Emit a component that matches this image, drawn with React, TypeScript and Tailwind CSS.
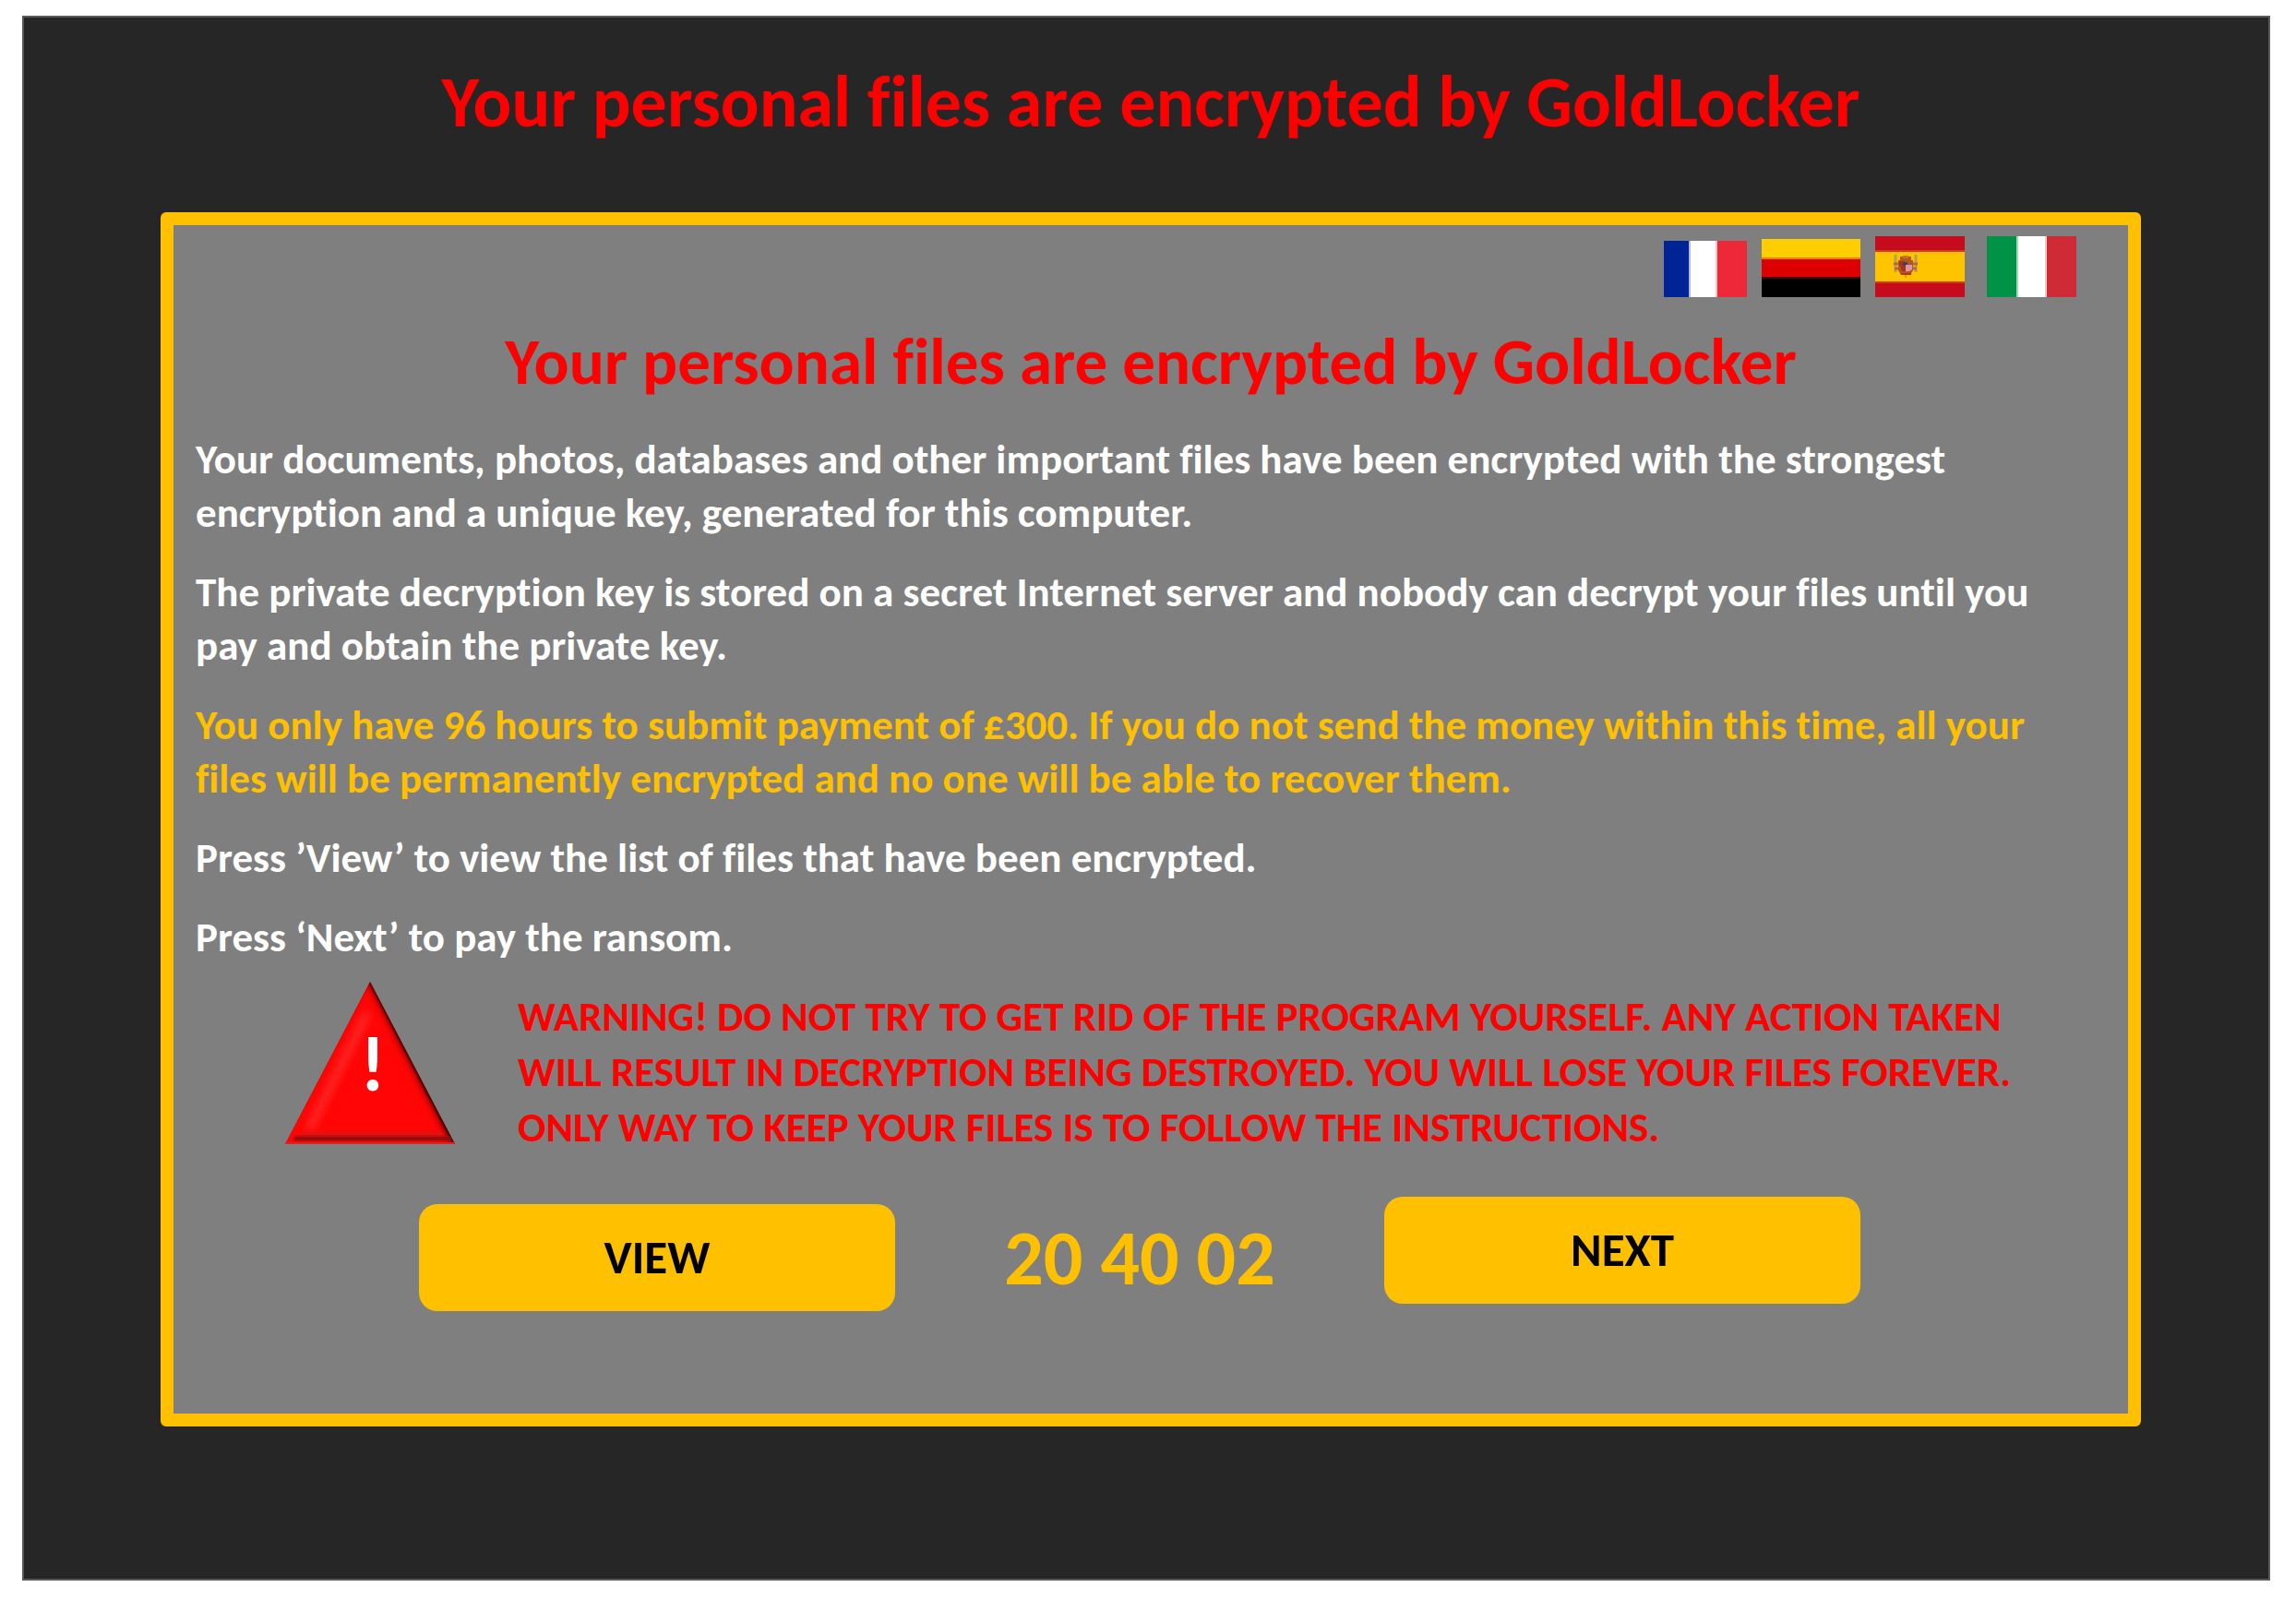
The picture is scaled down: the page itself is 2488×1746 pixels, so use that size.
import React from 'react';

function FrenchFlag() {
  return (
    <svg viewBox="0 0 90 61" className="block w-[90px] h-[61px]" aria-hidden="true">
      <rect width="90" height="61" fill="#ffffff" />
      <rect width="27" height="61" fill="#002395" />
      <rect x="27" width="2" height="61" fill="#b2bddf" />
      <rect x="56" width="2" height="61" fill="#f9bfc4" />
      <rect x="58" width="32" height="61" fill="#ed2939" />
    </svg>
  );
}

function GermanFlag() {
  return (
    <svg viewBox="0 0 107 63" className="block w-[107px] h-[63px]" aria-hidden="true">
      <rect width="107" height="21" fill="#ffce00" />
      <rect y="21" width="107" height="21" fill="#dd0000" />
      <rect y="41" width="107" height="22" fill="#000000" />
      <rect y="20" width="107" height="2" fill="#f08000" />
      <rect y="41" width="107" height="2" fill="#500000" />
    </svg>
  );
}

function SpanishFlag() {
  return (
    <svg viewBox="0 0 97 66" className="block w-[97px] h-[66px]" aria-hidden="true">
      <rect width="97" height="66" fill="#c60b1e" />
      <rect y="15" width="97" height="36" fill="#d63a18" />
      <rect y="17" width="97" height="32" fill="#ffc400" />
      {/* Coat of arms */}
      <path d="M22 20v19M44 20v19" stroke="#b9a04a" strokeWidth="3" />
      <path d="M20 30h5M41 30h5M21 35h4M41 35h4" stroke="#b8684a" strokeWidth="3" />
      <path d="M27 22h12v4h2v11l-3 5H28l-3-5V26h2z" fill="#b5561c" />
      <path d="M30 21h6v3h-6z" fill="#c8781c" />
      <path d="M26 27h6v5h-6z" fill="#a03a14" />
      <path d="M30 28h5v4h-5z" fill="#4a3c60" />
      <path d="M33 31h7v5l-3 2h-4z" fill="#d59aa8" />
      <path d="M27 32h6v6h-4z" fill="#a8321a" />
      <path d="M28 40h11v2H28z" fill="#b03a14" />
      <path d="M32 42h2v3h-2z" fill="#d9a010" />
    </svg>
  );
}

function ItalianFlag() {
  return (
    <svg viewBox="0 0 97 66" className="block w-[97px] h-[66px]" aria-hidden="true">
      <rect width="97" height="66" fill="#ffffff" />
      <rect width="32" height="66" fill="#009246" />
      <rect x="32" width="2" height="66" fill="#a6d8be" />
      <rect x="63" width="2" height="66" fill="#f2c6ca" />
      <rect x="65" width="32" height="66" fill="#ce2b37" />
    </svg>
  );
}

function WarningSign() {
  return (
    <svg viewBox="0 0 184 176" className="block w-[184px] h-[176px] shrink-0" role="img" aria-label="Warning">
      <defs>
        <clipPath id="sign">
          <path d="M92 0L184 176H0z" />
        </clipPath>
        <filter id="soft" filterUnits="userSpaceOnUse" x="-30" y="-30" width="244" height="240">
          <feGaussianBlur stdDeviation="4" />
        </filter>
        <filter id="edge" filterUnits="userSpaceOnUse" x="-30" y="-30" width="244" height="240">
          <feGaussianBlur stdDeviation="1" />
        </filter>
      </defs>
      <g clipPath="url(#sign)">
        <rect width="184" height="176" fill="#ff0505" />
        <path d="M89 34L26 160" stroke="#ff2626" strokeWidth="9" filter="url(#soft)" />
        <path d="M92 -4L-4 178" stroke="#d80404" strokeWidth="5" filter="url(#edge)" />
        <path d="M95 -4L188 176" stroke="#3a0000" strokeWidth="11" filter="url(#soft)" />
        <path d="M93 0L184 176" stroke="#1e0a0a" strokeWidth="3" filter="url(#edge)" />
        <path d="M18 165H170" stroke="#dc1414" strokeWidth="4" filter="url(#edge)" />
        <path d="M10 170H180" stroke="#8c1010" strokeWidth="5" filter="url(#edge)" />
        <path d="M0 175H184" stroke="#dc2424" strokeWidth="2" />
      </g>
      <text x="95" y="118" textAnchor="middle" fill="#ffffff" fontSize="84" fontWeight="700">!</text>
    </svg>
  );
}

const languages = [
  { name: 'Français', flag: <FrenchFlag />, className: '' },
  { name: 'Deutsch', flag: <GermanFlag />, className: 'ml-4' },
  { name: 'Español', flag: <SpanishFlag />, className: 'ml-4' },
  { name: 'Italiano', flag: <ItalianFlag />, className: 'ml-6' },
];

export default function App() {
  return (
    <div className="min-h-screen bg-white pt-[17px] pl-6 pr-7 pb-8 font-['Carlito','Lato',sans-serif] font-bold [font-variant-ligatures:none]">
      <div className="bg-[#262626] border-2 border-[#595959] pt-[52px] pl-[148px] pr-[138px] pb-[165px]">
        <h1 className="text-center text-[78px] leading-[80px] text-[#ff0000]">
          Your personal files are encrypted by GoldLocker
        </h1>

        <main className="mt-[79px] bg-[#7f7f7f] border-14 border-[#ffc000] rounded-md pt-3 pb-[111px]">
          {/* Languages */}
          <nav className="flex items-end justify-end pr-14">
            {languages.map((language) => (
              <button key={language.name} type="button" aria-label={language.name} className={language.className}>
                {language.flag}
              </button>
            ))}
          </nav>

          <h2 className="mt-[34px] text-center text-[71px] leading-[72px] text-[#ff0000]">
            Your personal files are encrypted by GoldLocker
          </h2>

          {/* Message */}
          <div className="mt-[41px] px-6 flex flex-col gap-7 text-[45px] leading-[58px] text-white">
            <p>
              Your documents, photos, databases and other important files have been encrypted with the strongest
              <br />
              encryption and a unique key, generated for this computer.
            </p>
            <p>
              The private decryption key is stored on a secret Internet server and nobody can decrypt your files until you
              <br />
              pay and obtain the private key.
            </p>
            <p className="text-[#ffc000]">
              You only have 96 hours to submit payment of £300. If you do not send the money within this time, all your
              <br />
              files will be permanently encrypted and no one will be able to recover them.
            </p>
            <p>Press ’View’ to view the list of files that have been encrypted.</p>
            <p>Press ‘Next’ to pay the ransom.</p>
          </div>

          {/* Warning */}
          <div className="mt-[19px] pl-[121px] flex items-start gap-[68px]">
            <WarningSign />
            <p className="pt-2 text-[45px] leading-[60px] text-[#ff0000]">
              WARNING! DO NOT TRY TO GET RID OF THE PROGRAM YOURSELF. ANY ACTION TAKEN
              <br />
              WILL RESULT IN DECRYPTION BEING DESTROYED. YOU WILL LOSE YOUR FILES FOREVER.
              <br />
              ONLY WAY TO KEEP YOUR FILES IS TO FOLLOW THE INSTRUCTIONS.
            </p>
          </div>

          {/* Actions */}
          <div className="mt-[45px] pl-[266px] pr-[290px] flex items-start justify-between">
            <button type="button" className="mt-2 w-[516px] h-[116px] rounded-[20px] bg-[#ffc000] text-[51px] text-black">
              VIEW
            </button>
            <div className="mt-[22px] text-[84px] leading-[90px] text-[#ffc000]">20 40 02</div>
            <button type="button" className="w-[516px] h-[116px] rounded-[20px] bg-[#ffc000] text-[51px] text-black">
              NEXT
            </button>
          </div>
        </main>
      </div>
    </div>
  );
}
